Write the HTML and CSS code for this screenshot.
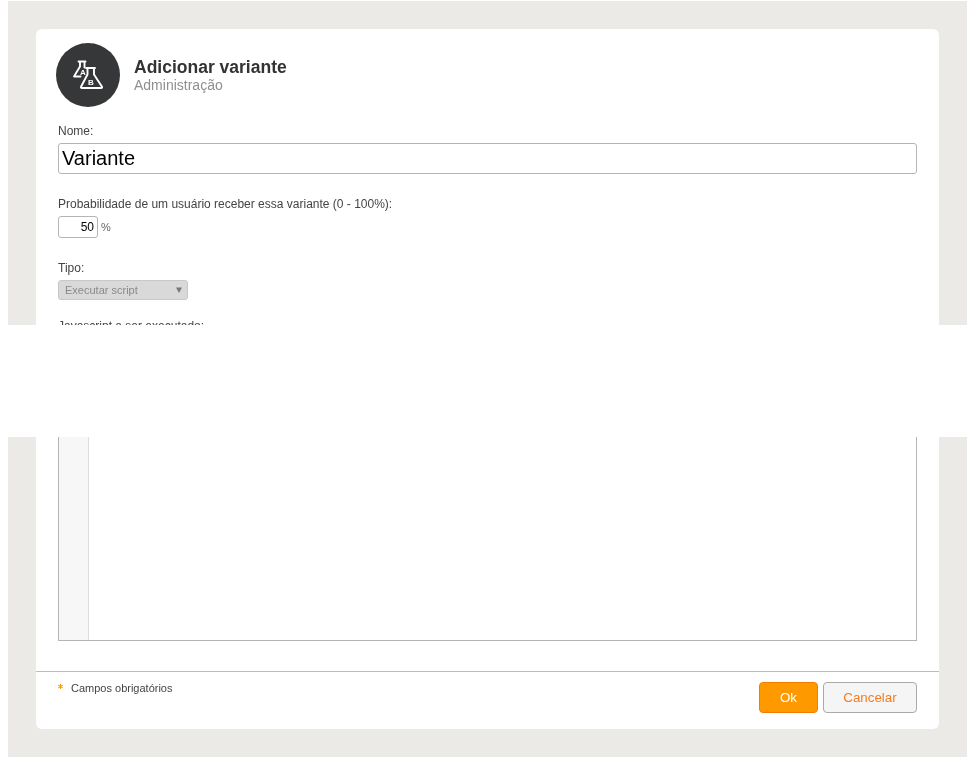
FILE: index.html
```html
<!DOCTYPE html>
<html lang="pt-BR">
<head>
<meta charset="utf-8">
<title>Adicionar variante</title>
<link rel="stylesheet" href="styles.css">
</head>
<body>
<div class="backdrop">
  <div class="card">
    <header class="head">
      <div class="avatar">
        <svg class="flask" width="32" height="32" viewBox="0 0 32 32" fill="none" stroke="#fff" stroke-width="1.900" stroke-linejoin="round" stroke-linecap="round">
          <path d="M6.500 2.500h7M8 2.500v5L2 17.500h6.500M12.500 2.500v6"/>
          <path d="M14 9h9M15.500 9v6.500L9 27.800a.8.8 0 0 0 .7 1.200h19.600a.8.8 0 0 0 .7-1.200L22 15.500V9"/>
          <text class="flask-letter" x="10.800" y="15.800">A</text>
          <text class="flask-letter" x="18.800" y="26.300">B</text>
        </svg>
      </div>
      <div class="titles">
        <h1 class="title">Adicionar variante</h1>
        <p class="subtitle">Administração</p>
      </div>
    </header>

    <form class="form">
      <label class="label label-name">Nome:</label>
      <input class="input-name" type="text" value="Variante">

      <label class="label label-prob">Probabilidade de um usuário receber essa variante (0 - 100%):</label>
      <div class="prob-row">
        <input class="input-prob" type="text" value="50">
        <span class="unit">%</span>
      </div>

      <label class="label label-type">Tipo:</label>
      <div class="select">
        <span>Executar script</span>
        <svg class="caret" width="6" height="6" viewBox="0 0 6 6"><path d="M0 .5h6L3 6z"/></svg>
      </div>

      <label class="label label-js">Javascript a ser executado:</label>
      <div class="editor">
        <div class="gutter"></div>
        <div class="code"></div>
      </div>
    </form>

    <footer class="foot">
      <div class="required">
        <svg class="star" width="5" height="5" viewBox="0 0 5 5"><path d="M2.500 0v5M.3 1.200l4.400 2.600M.3 3.800l4.400-2.600" stroke="#f90" stroke-width="1.100" fill="none"/></svg>
        <span>Campos obrigatórios</span>
      </div>
      <div class="actions">
        <button class="btn btn-ok" type="button">Ok</button>
        <button class="btn btn-cancel" type="button">Cancelar</button>
      </div>
    </footer>
  </div>
</div>
<div class="mask"></div>
</body>
</html>
```

FILE: styles.css
```css
* { box-sizing: border-box; }

html, body { background: #fff; }

body {
  margin: 1px 8px 9px;
  font-family: "Liberation Sans", Arial, sans-serif;
  color: #444;
}

.backdrop {
  width: 959px;
  height: 756px;
  padding: 28px;
  background: #ebeae6;
}

.card {
  display: flex;
  flex-direction: column;
  width: 903px;
  height: 700px;
  background: #fff;
  border-radius: 6px;
  will-change: transform;
}

.head {
  display: flex;
  align-items: center;
  gap: 14px;
  padding: 14px 20px 0;
}

.avatar {
  display: flex;
  align-items: center;
  justify-content: center;
  width: 64px;
  height: 64px;
  border-radius: 50%;
  background: #363738;
}

.flask-letter {
  fill: #fff;
  stroke: none;
  font-family: "Liberation Sans", Arial, sans-serif;
  font-weight: bold;
  font-size: 8px;
  text-anchor: middle;
}

.title {
  margin: 0;
  font-size: 17.500px;
  line-height: 20px;
  font-weight: bold;
  color: #333;
}

.subtitle {
  margin: 0;
  font-size: 14px;
  line-height: 16px;
  color: #8f8f8f;
}

.form {
  display: flex;
  flex-direction: column;
  align-items: flex-start;
  padding: 0 22px;
}

.label {
  display: block;
  font-size: 12px;
  line-height: 14px;
  color: #444;
}

.label-name { margin-top: 17px; margin-bottom: 5px; }
.label-prob { margin-top: 23px; margin-bottom: 5px; }
.label-type { margin-top: 23px; margin-bottom: 5px; }
.label-js { margin-top: 19px; margin-bottom: 5px; }

.input-name {
  width: 859px;
  height: 31px;
  padding: 0 3px;
  border: 1px solid #b5b5b5;
  border-radius: 3px;
  font: 20px "Liberation Sans", Arial, sans-serif;
  color: #000;
  background: #fff;
}

.prob-row {
  display: flex;
  align-items: center;
  gap: 3px;
}

.input-prob {
  width: 40px;
  height: 22px;
  padding: 0 3px;
  border: 1px solid #b5b5b5;
  border-radius: 3px;
  font: 12px "Liberation Sans", Arial, sans-serif;
  text-align: right;
  color: #000;
  background: #fff;
}

.unit {
  font-size: 11px;
  color: #666;
}

.select {
  display: flex;
  align-items: center;
  justify-content: space-between;
  width: 130px;
  height: 20px;
  padding: 0 5px 0 6px;
  border: 1px solid #c8c8c8;
  border-radius: 3px;
  background: #d9d9d9;
  font-size: 11px;
  color: #8a8a8a;
}

.caret {
  fill: #777;
}

.editor {
  display: flex;
  flex: none;
  width: 859px;
  height: 303px;
  border: 1px solid #b5b5b5;
  border-top: 0;
}

.gutter {
  width: 30px;
  background: #f7f7f7;
  border-right: 1px solid #ddd;
}

.code {
  flex: 1;
  background: #fff;
}

.foot {
  display: flex;
  justify-content: space-between;
  align-items: flex-start;
  margin-top: 30px;
  padding: 10px 22px 0;
  border-top: 1px solid #bcbcbc;
}

.required {
  display: flex;
  align-items: center;
  gap: 8px;
  font-size: 11px;
  line-height: 13px;
  color: #444;
}

.star {
  margin-top: -5px;
}

.actions {
  display: flex;
  gap: 5px;
}

.btn {
  height: 31px;
  border-radius: 4px;
  font: 13.333px "Liberation Sans", Arial, sans-serif;
  padding: 0;
}

.btn-ok {
  width: 59px;
  border: 1px solid #f57c00;
  background: #ff9900;
  color: #fff;
}

.btn-cancel {
  width: 94px;
  border: 1px solid #aaa;
  background: #f5f5f5;
  color: #f57c1f;
}

/* White band lying over the page, as in the reference */
.mask {
  position: absolute;
  left: 8px;
  top: 325px;
  width: 959px;
  height: 112px;
  background: #fff;
}
```
